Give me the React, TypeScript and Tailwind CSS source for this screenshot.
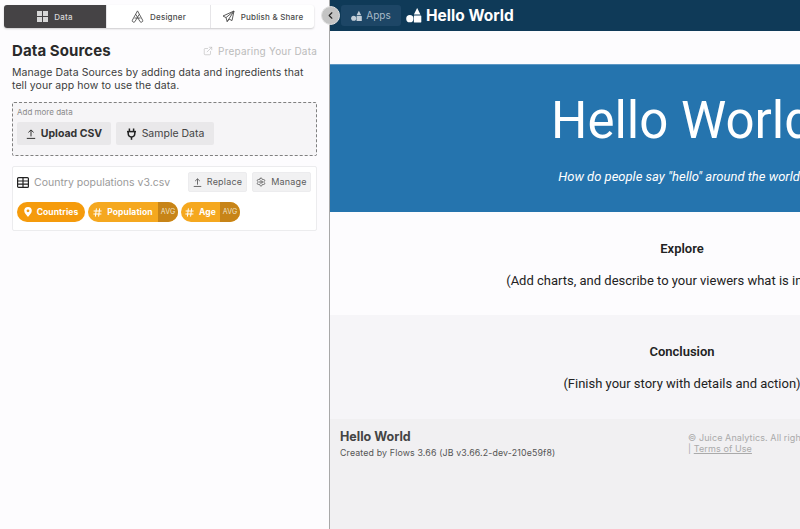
import React from 'react';
import { ChevronLeft, ExternalLink, Settings } from 'lucide-react';

const ShapesLogo: React.FC<{ size: number; className?: string }> = ({ size, className }) => (
    <svg width={size} height={size} viewBox="0 0 16 16" className={className} fill="currentColor">
        <path d="M10.5 1 L13.6 7 L7.4 7 Z" />
        <rect x="7.4" y="8" width="7" height="6.6" rx="0.4" />
        <circle cx="3.6" cy="11" r="3.4" />
    </svg>
);

const GridIcon = () => (
    <svg width="11" height="11" viewBox="0 0 11 11" fill="currentColor">
        <rect x="0" y="0" width="5" height="5" />
        <rect x="6" y="0" width="5" height="5" />
        <rect x="0" y="6" width="5" height="5" />
        <rect x="6" y="6" width="5" height="5" />
    </svg>
);

const DesignerIcon = () => (
    <svg width="13" height="13" viewBox="0 0 12 12" fill="none" stroke="currentColor" strokeWidth="0.8" strokeLinejoin="round">
        <path d="M6 0.8 L10.8 9.5 A1.4 1.4 0 0 1 8.4 10.8 L4.4 4" />
        <path d="M6 0.8 L1.2 9.5 A1.4 1.4 0 0 0 3.6 10.8 L7.6 4" />
        <path d="M3.2 7.4 H8.8" />
    </svg>
);

const PlaneIcon = () => (
    <svg width="13" height="13" viewBox="0 0 13 13" fill="none" stroke="currentColor" strokeWidth="0.9" strokeLinejoin="round">
        <path d="M12 1 L1 6 L4 7.6 L5.2 11.6 L7 9 L10 10.6 Z" />
        <path d="M12 1 L4 7.6 M12 1 L5.2 11.6" />
    </svg>
);

const UploadIcon: React.FC<{ size: number }> = ({ size }) => (
    <svg width={size} height={size} viewBox="0 0 10 10" fill="none" stroke="currentColor" strokeWidth="1">
        <path d="M5 7.4 V1 M2.4 3.4 L5 0.9 L7.6 3.4" />
        <path d="M0.8 9.4 H9.2" />
    </svg>
);

const PlugIcon = () => (
    <svg width="11" height="12" viewBox="0 0 11 12" fill="none" stroke="currentColor" strokeWidth="1.5">
        <path d="M3.4 0.4 V3.4 M7.6 0.4 V3.4" />
        <path d="M1 3.6 H10" />
        <path d="M2.2 3.6 V5.6 A3.3 3.3 0 0 0 8.8 5.6 V3.6" />
        <path d="M5.5 9 V11.8" />
    </svg>
);

const TableIcon = () => (
    <svg width="12" height="11" viewBox="0 0 12 11" fill="none" stroke="currentColor" strokeWidth="1.2">
        <rect x="0.6" y="0.6" width="10.8" height="9.8" rx="1" />
        <path d="M0.6 4 H11.4 M0.6 7.2 H11.4 M6 0.6 V10.4" />
    </svg>
);

const PinIcon = () => (
    <svg width="8" height="10" viewBox="0 0 8 10">
        <path fillRule="evenodd" fill="currentColor" d="M4 0 A3.8 3.8 0 0 1 7.8 3.8 C7.8 6 5.4 8.4 4 10 C2.6 8.4 0.2 6 0.2 3.8 A3.8 3.8 0 0 1 4 0 Z M4 2.4 A1.4 1.4 0 1 0 4 5.2 A1.4 1.4 0 1 0 4 2.4 Z" />
    </svg>
);

const HashIcon = () => (
    <svg width="9" height="9" viewBox="0 0 9 9" fill="none" stroke="currentColor" strokeWidth="1">
        <path d="M3.4 0.4 L2.4 8.6 M6.6 0.4 L5.6 8.6 M0.6 3 H8.6 M0.4 6 H8.4" />
    </svg>
);

const Tab: React.FC<{ icon: React.ReactNode; label: string; active?: boolean; width: string }> = ({ icon, label, active, width }) => (
    <div className={`${width} flex items-center justify-center gap-[6px] text-[8px] font-medium tracking-[0.2px] border-r border-[#e6e5e8] last:border-r-0 ${active ? 'bg-[#454345] text-[#d8d8d8] rounded-l-[3px]' : 'text-[#4a4a4a]'}`}>
        {icon}
        <span>{label}</span>
    </div>
);

const SmallButton: React.FC<{ icon: React.ReactNode; label: string; width: string }> = ({ icon, label, width }) => (
    <div className={`${width} h-5 flex items-center justify-center gap-[5px] bg-[#f1f1f2] border border-[#ececee] rounded-[2px] text-[9px] text-[#5c5c5c] tracking-[0.2px]`}>
        {icon}
        <span>{label}</span>
    </div>
);

const Pill: React.FC<{ icon: React.ReactNode; label: string; avg?: boolean; width: string; dark?: boolean }> = ({ icon, label, avg, width, dark }) => (
    <div className={`${width} h-5 flex items-stretch rounded-full overflow-hidden text-white text-[8.5px] font-bold tracking-[0.1px] ${dark ? 'bg-[#f59b0c]' : 'bg-[#f5a81f]'}`}>
        <div className="flex-1 flex items-center justify-center gap-[5px]">
            {icon}
            <span>{label}</span>
        </div>
        {avg && <div className="w-5 flex items-center justify-center bg-[#c78418] text-[7px] font-normal text-[#f0e3c8]">AVG</div>}
    </div>
);

export default function App() {
    return (
        <div className="relative w-[800px] h-[529px] flex overflow-hidden bg-[#fdfcfe] font-['Inter',sans-serif]">
            <aside className="w-[330px] shrink-0 h-full border-r border-[#a8a8a8] px-[4px] pt-[5px]">
                <div className="w-[310px] h-[23px] flex bg-white rounded-[3px] shadow-[0_1px_2px_rgba(0,0,0,0.2)]">
                    <Tab width="w-[103px]" active icon={<GridIcon />} label="Data" />
                    <Tab width="w-[104px]" icon={<DesignerIcon />} label="Designer" />
                    <Tab width="w-[103px]" icon={<PlaneIcon />} label="Publish & Share" />
                </div>

                <div className="pl-[8px] w-[313px]">
                    <div className="mt-[13px] h-[20px] flex items-center justify-between">
                        <h1 className="text-[15px] font-bold tracking-[0.1px] text-[#2a2a2a]">Data Sources</h1>
                        <div className="flex items-center gap-[5px] text-[10px] text-[#bbbbbb] tracking-[0.2px]">
                            <ExternalLink size={10} strokeWidth={1.5} />
                            <span>Preparing Your Data</span>
                        </div>
                    </div>
                    <p className="mt-[5px] text-[10.5px] leading-[13px] tracking-[0.07px] text-[#3c3c3c]">
                        Manage Data Sources by adding data and ingredients that tell your app how to use the data.
                    </p>

                    <div className="mt-[10px] h-[54px] border border-dashed border-[#808080] rounded-[2px] bg-[#f6f5f7] px-[4px] pt-[4px]">
                        <div className="text-[8px] leading-[11px] text-[#8a8a8a]">Add more data</div>
                        <div className="mt-[4px] flex gap-[5px]">
                            <div className="w-[94px] h-[23px] flex items-center justify-center gap-[5px] bg-[#e9e8ea] rounded-[2px] text-[10.5px] font-bold text-[#333333]">
                                <UploadIcon size={10} />
                                <span>Upload CSV</span>
                            </div>
                            <div className="w-[98px] h-[23px] flex items-center justify-center gap-[5px] bg-[#e9e8ea] rounded-[2px] text-[10.5px] text-[#444444]">
                                <span className="text-[#222222]"><PlugIcon /></span>
                                <span>Sample Data</span>
                            </div>
                        </div>
                    </div>

                    <div className="mt-[10px] h-[65px] border border-[#ececee] rounded-[2px] bg-white px-[4px] pt-[5px]">
                        <div className="flex items-center h-5">
                            <span className="text-[#222222]"><TableIcon /></span>
                            <span className="ml-[5px] pt-[1px] text-[10.5px] text-[#9a9a9a]">Country populations v3.csv</span>
                            <div className="ml-auto flex gap-[5px] mr-[1px]">
                                <SmallButton width="w-[59px]" icon={<UploadIcon size={9} />} label="Replace" />
                                <SmallButton width="w-[59px]" icon={<Settings size={10} strokeWidth={1.5} className="text-[#333333]" />} label="Manage" />
                            </div>
                        </div>
                        <div className="mt-[10px] flex gap-[3px]">
                            <Pill width="w-[68px]" dark icon={<PinIcon />} label="Countries" />
                            <Pill width="w-[90px]" avg icon={<HashIcon />} label="Population" />
                            <Pill width="w-[59px]" avg icon={<HashIcon />} label="Age" />
                        </div>
                    </div>
                </div>
            </aside>

            <main className="flex-1 h-full flex flex-col overflow-hidden">
                <header className="h-[31px] shrink-0 flex items-center bg-[#0f3a58] pl-[11px]">
                    <div className="w-[60px] h-[21px] flex items-center justify-center gap-[3px] bg-[#1d4666] rounded-[3px] text-[10px] text-[#a9bac8]">
                        <ShapesLogo size={12} className="text-[#c3ced8]" />
                        <span>Apps</span>
                    </div>
                    <ShapesLogo size={17} className="ml-[5px] text-white" />
                    <span className="ml-[3px] text-[15.5px] font-bold text-white">Hello World</span>
                </header>

                <div className="w-[704px] flex-1 flex flex-col font-['Roboto',sans-serif]">
                    <section className="mt-[33px] h-[148px] shrink-0 bg-[#2574ae] border-t border-[#5d97c4] flex flex-col items-center text-white">
                        <h2 className="mt-[21px] text-[51px] leading-[70px] font-normal">Hello World</h2>
                        <p className="mt-[12px] text-[13px] leading-[18px] italic">How do people say "hello" around the world?</p>
                    </section>
                    <section className="h-[103px] shrink-0 flex flex-col items-center text-[#222222]">
                        <h3 className="mt-[28px] text-[13px] leading-[18px] font-semibold">Explore</h3>
                        <p className="mt-[14px] text-[13px] leading-[18px]">(Add charts, and describe to your viewers what is interesting)</p>
                    </section>
                    <section className="h-[104px] shrink-0 bg-[#f6f5f8] flex flex-col items-center text-[#222222]">
                        <h3 className="mt-[28px] text-[13px] leading-[18px] font-semibold">Conclusion</h3>
                        <p className="mt-[14px] text-[13px] leading-[18px]">(Finish your story with details and action)</p>
                    </section>
                    <footer className="flex-1 bg-[#f1f0f2] flex pt-[10px] pl-[10px] font-['Inter',sans-serif]">
                        <div className="w-[348px]">
                            <div className="text-[12.5px] leading-[16px] font-bold text-[#444444]">Hello World</div>
                            <div className="mt-[2px] text-[8.8px] leading-[12px] tracking-[0.15px] text-[#555555]">Created by Flows 3.66 (JB v3.66.2-dev-210e59f8)</div>
                        </div>
                        <div className="pt-[3px] text-[9px] leading-[11px] tracking-[0.1px] text-[#aaaaaa]">
                            <div className="whitespace-nowrap">© Juice Analytics. All rights reserved.</div>
                            <div>| <span className="underline">Terms of Use</span></div>
                        </div>
                    </footer>
                </div>
            </main>

            <button className="absolute left-[321px] top-[6px] w-[19px] h-[19px] flex items-center justify-center rounded-full bg-[#c4c4c4] border border-[#e2e2e2] text-[#222222]">
                <ChevronLeft size={11} strokeWidth={2.4} />
            </button>
        </div>
    );
}
